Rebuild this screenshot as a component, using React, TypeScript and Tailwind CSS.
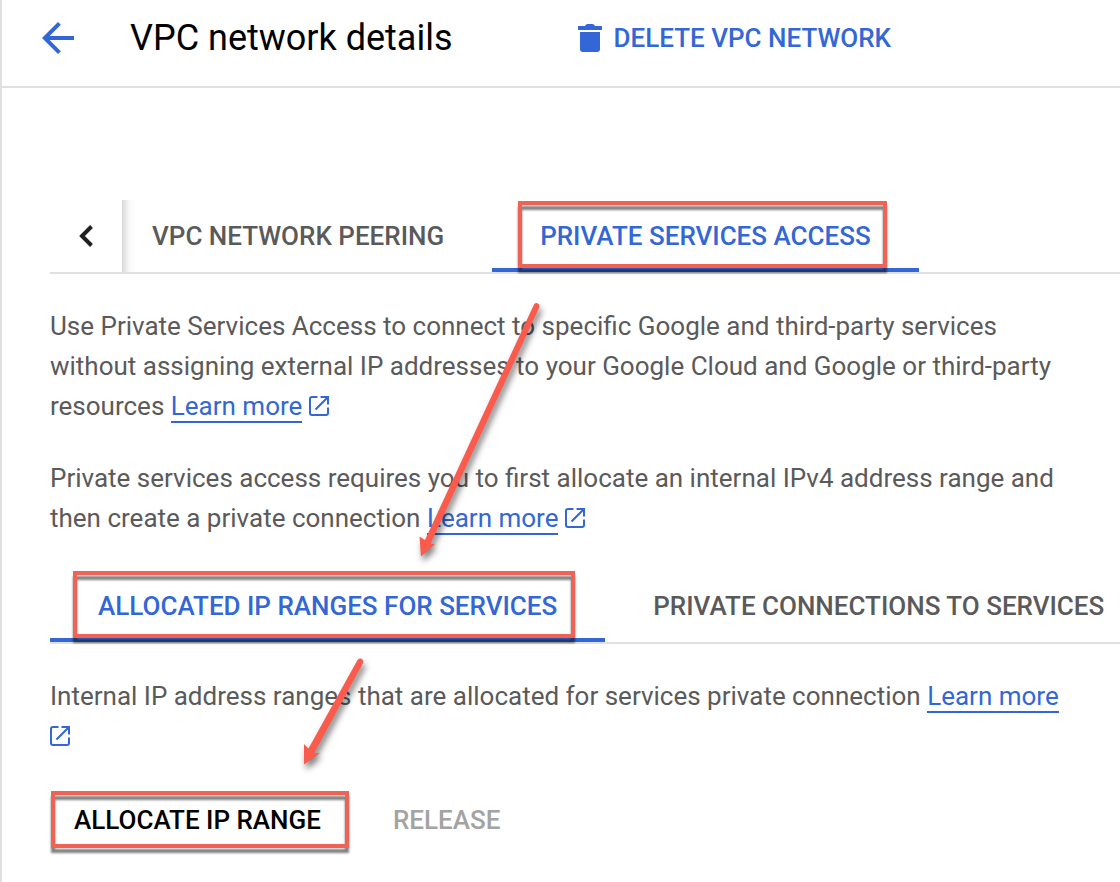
import type { ReactNode } from 'react'

function BackArrow() {
  return (
    <svg viewBox="0 0 24 24" className="w-12 h-12" fill="currentColor" aria-hidden="true">
      <path d="M20 11H7.83l5.59-5.59L12 4l-8 8 8 8 1.41-1.41L7.83 13H20v-2z" />
    </svg>
  )
}

function TrashIcon() {
  return (
    <svg viewBox="0 0 24 28" className="w-6 h-7" fill="currentColor" aria-hidden="true">
      <path d="M0 2h7q1-2 2.500-2h5q1.500 0 2.500 2H24v4H0z" />
      <path d="M2 8h20v17q0 3-3 3H5q-3 0-3-3z" />
    </svg>
  )
}

function ExternalIcon() {
  return (
    <svg viewBox="0 0 20 20" className="inline-block w-5 h-5 align-[-1px] text-[#3367d6]" fill="none" stroke="currentColor" strokeWidth="2" aria-hidden="true">
      <path d="M8.500 1H3a2 2 0 0 0-2 2v14a2 2 0 0 0 2 2h14a2 2 0 0 0 2-2v-5.500" />
      <path d="M11.500 1H19v7.500M19 1L6.500 13.500" />
    </svg>
  )
}

function LearnMore() {
  return (
    <>
      <a href="#learn-more" className="border-b-2 border-[#3367d6] text-[#3367d6]">Learn more</a>{' '}
      <ExternalIcon />
    </>
  )
}

// Red callout frame drawn over a control
function Frame({ className }: { className: string }) {
  return (
    <span
      aria-hidden="true"
      className={`absolute pointer-events-none border-4 border-[#f06253] drop-shadow-[0_5px_1px_rgba(0,0,0,0.5)] ${className}`}
    />
  )
}

function Tab({ active, className, children }: { active?: boolean; className: string; children: ReactNode }) {
  return (
    <button
      type="button"
      role="tab"
      aria-selected={!!active}
      className={`relative shrink-0 h-[72px] font-medium whitespace-nowrap ${active ? 'text-[#3367d6]' : 'text-[#5a5a5a]'} ${className}`}
    >
      {active && <span className="absolute left-0 right-0 bottom-0 h-1 bg-[#3367d6]" />}
      {children}
    </button>
  )
}

function Arrows() {
  return (
    <svg
      className="absolute left-0 top-0 w-[600px] h-[800px] pointer-events-none drop-shadow-[2px_5px_3px_rgba(0,0,0,0.5)]"
      viewBox="2 0 600 800"
      fill="#fb5b4d"
      aria-hidden="true"
    >
      <path d="M534 304.500Q536 302 538.500 304Q540 305.500 539 308L430.500 544L435 544L421 556.500L419.500 536.500L425 540z" />
      <path d="M357.500 660Q360 657.500 362.500 659.500Q364 661.500 362.500 664L314 753.500L320 753L304 764.500L304 744L308.500 748.500z" />
    </svg>
  )
}

export default function App() {
  return (
    <div className="relative overflow-hidden border-l-2 border-[#e0e0e0] bg-white pb-8 font-['Roboto',sans-serif] text-[26px] leading-10 text-[#5a5a5a]">
      <header className="flex items-center h-[88px] pb-[10px] border-b-2 border-[#e0e0e0] pl-8">
        <button type="button" aria-label="Back" className="text-[#3367d6]">
          <BackArrow />
        </button>
        <h1 className="ml-12 text-[36px] text-black whitespace-nowrap">VPC network details</h1>
        <button type="button" className="ml-[125px] flex items-center gap-3 font-medium text-[#3367d6] whitespace-nowrap">
          <TrashIcon />
          DELETE VPC NETWORK
        </button>
      </header>

      <main className="mt-28 pl-12">
        <div role="tablist" className="flex border-b-2 border-[#e0e0e0]">
          <button type="button" aria-label="Previous tabs" className="flex shrink-0 w-[72px] items-center justify-center text-[#212121]">
            <svg viewBox="0 0 14 22" className="w-[14px] h-[22px]" fill="none" stroke="currentColor" strokeWidth="4" aria-hidden="true">
              <path d="M12.500 1.500L3 11l9.500 9.500" />
            </svg>
          </button>
          <span className="shrink-0 w-[14px] bg-linear-to-r from-[#d8d8d8] via-[#f8f8f8] to-white" />
          <Tab className="pl-4 pr-12">VPC NETWORK PEERING</Tab>
          <Tab active className="px-12">
            PRIVATE SERVICES ACCESS
            <Frame className="left-[26px] right-8 top-px bottom-1" />
          </Tab>
        </div>

        <div className="flex flex-col gap-8 py-8 pr-10">
          <p>
            Use Private Services Access to connect to specific Google and third-party services
            without assigning external IP addresses to your Google Cloud and Google or third-party
            resources <LearnMore />
          </p>
          <p>
            Private services access requires you to first allocate an internal IPv4 address range and
            then create a private connection <LearnMore />
          </p>
        </div>

        <div role="tablist" className="flex border-b-2 border-[#e0e0e0]">
          <Tab active className="px-12">
            ALLOCATED IP RANGES FOR SERVICES
            <Frame className="left-[23px] right-[30px] top-px bottom-1" />
          </Tab>
          <Tab className="px-12">PRIVATE CONNECTIONS TO SERVICES</Tab>
        </div>

        <p className="py-8 pr-10">
          Internal IP address ranges that are allocated for services private connection <LearnMore />
        </p>

        <div className="flex gap-6">
          <button type="button" className="relative h-16 px-6 font-medium text-black whitespace-nowrap">
            ALLOCATE IP RANGE
            <Frame className="left-px -right-1 top-[3px] bottom-1" />
          </button>
          <button type="button" disabled className="h-16 px-6 font-medium text-[#a3a3a3]">
            RELEASE
          </button>
        </div>
      </main>

      <Arrows />
    </div>
  )
}
